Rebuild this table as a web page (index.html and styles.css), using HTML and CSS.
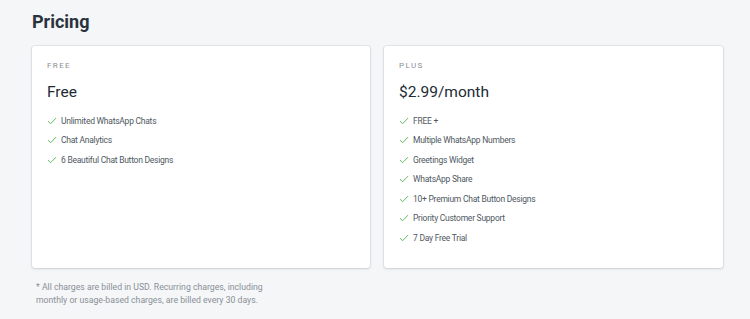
FILE: index.html
```html
<!DOCTYPE html>
<html>
<head>
<meta charset="utf-8">
<link rel="stylesheet" href="styles.css">
</head>
<body>
<main class="page">
  <h1 class="title">Pricing</h1>
  <div class="plans">
    <section class="card">
      <div class="plan-label">FREE</div>
      <div class="plan-price">Free</div>
      <ul class="features">
        <li><svg class="check" viewBox="0 0 12 10"><path d="M1 5.2 L4.3 8.4 L11 1.4"/></svg>Unlimited WhatsApp Chats</li>
        <li><svg class="check" viewBox="0 0 12 10"><path d="M1 5.2 L4.3 8.4 L11 1.4"/></svg>Chat Analytics</li>
        <li><svg class="check" viewBox="0 0 12 10"><path d="M1 5.2 L4.3 8.4 L11 1.4"/></svg>6 Beautiful Chat Button Designs</li>
      </ul>
    </section>
    <section class="card">
      <div class="plan-label">PLUS</div>
      <div class="plan-price">$2.99/month</div>
      <ul class="features">
        <li><svg class="check" viewBox="0 0 12 10"><path d="M1 5.2 L4.3 8.4 L11 1.4"/></svg>FREE +</li>
        <li><svg class="check" viewBox="0 0 12 10"><path d="M1 5.2 L4.3 8.4 L11 1.4"/></svg>Multiple WhatsApp Numbers</li>
        <li><svg class="check" viewBox="0 0 12 10"><path d="M1 5.2 L4.3 8.4 L11 1.4"/></svg>Greetings Widget</li>
        <li><svg class="check" viewBox="0 0 12 10"><path d="M1 5.2 L4.3 8.4 L11 1.4"/></svg>WhatsApp Share</li>
        <li><svg class="check" viewBox="0 0 12 10"><path d="M1 5.2 L4.3 8.4 L11 1.4"/></svg>10+ Premium Chat Button Designs</li>
        <li><svg class="check" viewBox="0 0 12 10"><path d="M1 5.2 L4.3 8.4 L11 1.4"/></svg>Priority Customer Support</li>
        <li><svg class="check" viewBox="0 0 12 10"><path d="M1 5.2 L4.3 8.4 L11 1.4"/></svg>7 Day Free Trial</li>
      </ul>
    </section>
  </div>
  <p class="note">* All charges are billed in USD. Recurring charges, including<br>monthly or usage-based charges, are billed every 30 days.</p>
</main>
</body>
</html>
```
FILE: styles.css
```css
html, body {
  margin: 0;
  padding: 0;
  background: #f4f6f8;
}
body {
  font-family: Roboto, "Liberation Sans", sans-serif;
  color: #212b36;
}
.page {
  padding: 10px 27px 0 32px;
}
.title {
  margin: 0;
  font-size: 18px;
  font-weight: 700;
  line-height: 24px;
  color: #2a333d;
}
.plans {
  display: grid;
  grid-template-columns: 338px 339px;
  gap: 14px;
  margin-top: 12px;
}
.card {
  background: #fff;
  border-radius: 3px;
  box-shadow: 0 0 0 1px rgba(63, 63, 68, 0.07), 0 1px 3px 0 rgba(63, 63, 68, 0.15);
  height: 222px;
  box-sizing: border-box;
  padding: 15px 15px;
}
.plan-label {
  font-size: 8px;
  letter-spacing: 1.4px;
  color: #8a8f95;
  line-height: 10px;
}
.plan-price {
  margin-top: 10px;
  font-size: 15.5px;
  line-height: 22px;
  color: #212b36;
}
.features {
  list-style: none;
  margin: 8px 0 0;
  padding: 0;
}
.features li {
  display: flex;
  align-items: center;
  height: 19.5px;
  font-size: 8.5px;
  letter-spacing: -0.25px;
  color: #4f5861;
}
.check {
  width: 10px;
  height: 8px;
  margin-right: 4px;
  fill: none;
  stroke: #5cb85c;
  stroke-width: 1.2;
}
.note {
  margin: 13px 0 0 4px;
  font-size: 8.7px;
  line-height: 13px;
  color: #8a9097;
}
```
